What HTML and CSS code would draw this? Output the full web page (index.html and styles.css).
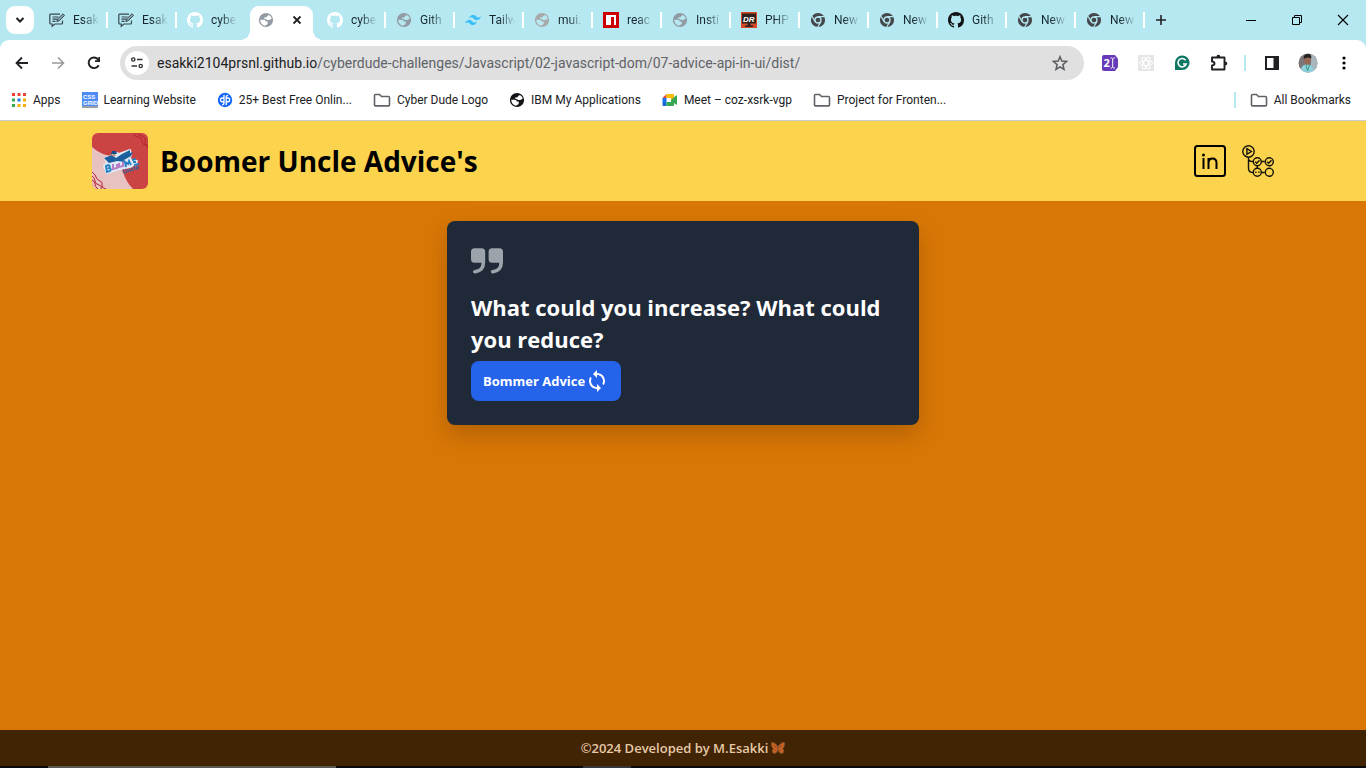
FILE: index.html
```html
<!DOCTYPE html>
<html lang="en">
<head>
<meta charset="utf-8">
<title>Boomer Uncle Advice's</title>
<meta name="viewport" content="width=device-width, initial-scale=1">
<link rel="stylesheet" href="styles.css">
</head>
<body>
<svg class="sprite" aria-hidden="true">
  <symbol id="globe" viewBox="0 0 16 16"><circle cx="8" cy="8" r="7.1" fill="currentColor"/><path class="globe-land" d="M6.300 5.300Q8.800 5.800 9 4.200L10.800 2.900q2.500 1.300 3 3.700L11.500 8H9.200Q8.300 6.900 6.300 7ZM2.200 7.800H5.800q2 0 2 1.600h1.900v2.600L7 13.800Q2.500 13 2.200 7.800Z"/></symbol>
  <symbol id="github" viewBox="0 0 16 16"><path fill="currentColor" fill-rule="evenodd" d="M8 0C3.580 0 0 3.580 0 8c0 3.540 2.290 6.530 5.470 7.590.4.070.55-.17.55-.38 0-.19-.010-.82-.010-1.490-2.010.37-2.530-.49-2.690-.94-.090-.23-.48-.94-.82-1.130-.28-.15-.68-.52-.010-.53.63-.010 1.080.58 1.230.82.72 1.210 1.870.87 2.330.66.070-.52.28-.87.51-1.070-1.780-.2-3.640-.89-3.640-3.950 0-.87.31-1.590.82-2.150-.080-.2-.36-1.020.080-2.120 0 0 .67-.21 2.200.82.64-.18 1.320-.27 2-.27s1.360.090 2 .27c1.530-1.040 2.200-.82 2.200-.82.44 1.100.16 1.920.080 2.120.51.56.82 1.270.82 2.150 0 3.070-1.870 3.750-3.650 3.950.29.25.54.73.54 1.480 0 1.070-.010 1.930-.010 2.200 0 .21.15.46.55.38A8.010 8.010 0 0 0 16 8c0-4.420-3.580-8-8-8Z"/></symbol>
  <symbol id="chrome" viewBox="0 0 16 16"><circle cx="8" cy="8" r="7.100" fill="#44474b"/><circle cx="8" cy="8" r="3" fill="#44474b" stroke="#b6e8f2" stroke-width="1.300"/><path d="M8 4.700h6.300M5.100 9.600 2 4.200M10.900 9.600 7.700 15" stroke="#b6e8f2" stroke-width="1.200"/></symbol>
  <symbol id="note" viewBox="0 0 16 16"><path d="M11 2.200H1.500Q.8 2.200.8 3v8q0 1 1 1h1.400v2.300L6 12h6.500q1 0 1-1V8.500M3.500 5h6M3.500 7.200h5M3.500 9.400h3" fill="none" stroke="#36474f" stroke-width="1.200"/><path d="m7.800 9.500.8-2.500L14 1.800 15.500 3.400 10.300 8.700Z" fill="#8aa7b0" stroke="#36474f"/></symbol>
  <symbol id="folder" viewBox="0 0 18 16"><path d="M1.500 13V3.500q0-1 1-1h4L8.500 4.500h7q1 0 1 1V13q0 .9-1 .9h-13q-1 0-1-.9Z" fill="none" stroke="#5f6368" stroke-width="1.600"/></symbol>
</svg>

<header class="browser">
  <div class="tabstrip">
    <button class="tab-search" aria-label="Search tabs"><svg width="10" height="8" viewBox="0 0 10 8"><path d="m1.500 2 3.500 3.500L8.500 2" fill="none" stroke="#222" stroke-width="2"/></svg></button>
    <nav class="tabs" aria-label="Tabs">
      <a class="tab" href="#"><svg class="icon"><use href="#note"/></svg><span>Esak</span></a>
      <a class="tab" href="#"><svg class="icon"><use href="#note"/></svg><span>Esak</span></a>
      <a class="tab last" href="#"><svg class="icon light"><use href="#github"/></svg><span>cybe</span></a>
      <div class="tab active"><svg class="icon gray on-white"><use href="#globe"/></svg><button class="close" aria-label="Close tab"><svg width="10" height="10" viewBox="0 0 10 10"><path d="m1.500 1.500 7 7m0-7-7 7" stroke="#222" stroke-width="1.800"/></svg></button></div>
      <a class="tab" href="#"><svg class="icon light"><use href="#github"/></svg><span>cybe</span></a>
      <a class="tab" href="#"><svg class="icon gray"><use href="#globe"/></svg><span>Gith</span></a>
      <a class="tab" href="#"><svg class="icon" viewBox="0 0 16 16"><path fill="#38bdf8" d="M4 6.500Q5 3 8 3c3 0 3.400 2.200 4.800 2.500Q14.500 6 16 4q-1 4-4 4C9 8 8.600 5.800 7.200 5.400Q5.500 5 4 6.500ZM0 11.500Q1 8 4 8c3 0 3.400 2.200 4.800 2.500Q10.500 11 12 9q-1 4-4 4c-3 0-3.400-2.200-4.800-2.500Q1.500 10 0 11.500Z"/></svg><span>Tailw</span></a>
      <a class="tab" href="#"><svg class="icon pale"><use href="#globe"/></svg><span>mui.</span></a>
      <a class="tab" href="#"><svg class="icon" viewBox="0 0 16 16"><path fill="#c00" d="M0 0h16v16H0Z"/><path fill="#fff" d="M3 3h10v10h-2V5H8v8H3Z"/></svg><span>reac</span></a>
      <a class="tab" href="#"><svg class="icon gray"><use href="#globe"/></svg><span>Insti</span></a>
      <a class="tab" href="#"><svg class="icon" viewBox="0 0 16 16"><path fill="#d94b27" d="M0 0h16v16H0Z"/><path fill="#32221f" d="M1 1.500h14v10H9.500v2H12V15H4v-1.500h2.500v-2H1Z"/><text class="logo-dr" x="2" y="9.500">DR</text></svg><span>PHP</span></a>
      <a class="tab" href="#"><svg class="icon"><use href="#chrome"/></svg><span>New</span></a>
      <a class="tab" href="#"><svg class="icon"><use href="#chrome"/></svg><span>New</span></a>
      <a class="tab" href="#"><svg class="icon black"><use href="#github"/></svg><span>Gith</span></a>
      <a class="tab" href="#"><svg class="icon"><use href="#chrome"/></svg><span>New</span></a>
      <a class="tab" href="#"><svg class="icon"><use href="#chrome"/></svg><span>New</span></a>
    </nav>
    <button class="new-tab" aria-label="New tab"><svg width="12" height="12" viewBox="0 0 12 12"><path d="M6 1v10M1 6h10" stroke="#222" stroke-width="1.600"/></svg></button>
    <div class="window-controls">
      <button aria-label="Minimize"><svg width="12" height="12"><path d="M1 6.500h10" stroke="#000"/></svg></button>
      <button aria-label="Restore"><svg width="12" height="12"><path d="M1.500 3.500h7v7h-7ZM3.500 3V1.500h7v7H9" fill="none" stroke="#000"/></svg></button>
      <button aria-label="Close window"><svg width="12" height="12"><path d="m1 1 10 10m0-10L1 11" stroke="#000" stroke-width="1.100"/></svg></button>
    </div>
  </div>

  <div class="toolbar">
    <div class="nav-buttons">
      <button aria-label="Back"><svg width="16" height="16"><path d="M14 8H3m5-5.500L2.500 8 8 13.500" fill="none" stroke="#202124" stroke-width="1.800"/></svg></button>
      <button aria-label="Forward"><svg width="16" height="16"><path d="M2 8h11M8 2.500 13.500 8 8 13.500" fill="none" stroke="#9a9a9a" stroke-width="1.600"/></svg></button>
      <button aria-label="Reload"><svg width="16" height="16"><path d="M12.700 10.200A5.300 5.300 0 1 1 12 4.300l1.300 1.500" fill="none" stroke="#202124" stroke-width="1.900"/><path d="M14 2v5H9V5.300h3.300V2Z" fill="#202124"/></svg></button>
    </div>
    <div class="omnibox">
      <button class="site-info" aria-label="Site information"><svg width="14" height="12" viewBox="0 0 14 12"><path d="M7 2.500h5.500M1.500 9H7" stroke="#333" stroke-width="1.700"/><circle cx="3.300" cy="2.500" r="1.600" fill="none" stroke="#333" stroke-width="1.400"/><circle cx="10.700" cy="9" r="1.600" fill="none" stroke="#333" stroke-width="1.400"/></svg></button>
      <a class="url" href="#"><span class="host">esakki2104prsnl.github.io</span>/cyberdude-challenges/Javascript/02-javascript-dom/07-advice-api-in-ui/dist/</a>
      <button class="star" aria-label="Bookmark this page"><svg width="16" height="16" viewBox="0 0 16 16"><path d="m8 1.700 1.800 4.400 4.700.4-3.600 3.100 1.100 4.700L8 11.800l-4 2.500 1.100-4.700-3.600-3.100 4.700-.4Z" fill="none" stroke="#5a5d60" stroke-width="1.500"/></svg></button>
    </div>
    <div class="extensions">
      <button aria-label="Tab counter"><svg width="16" height="16" viewBox="0 0 16 16"><path d="M2 0h11l3 4v8l-3 4H2q-2 0-2-2V2q0-2 2-2Z" fill="#673ab7"/><text class="logo-two" x="1.500" y="12">2</text><path d="M8.500 3h1.200l1 .8 1-.8h1.200M8.500 13h1.200l1-.8 1 .8h1.200M10.700 4v8" stroke="#fff" fill="none"/></svg></button>
      <button aria-label="React developer tools"><svg width="16" height="16" viewBox="0 0 16 16"><path fill="#e6e6e6" d="M0 0h16v16H0Z"/><g fill="none" stroke="#fff"><ellipse cx="8" cy="8" rx="6.500" ry="2.500"/><ellipse cx="8" cy="8" rx="6.500" ry="2.500" transform="rotate(60 8 8)"/><ellipse cx="8" cy="8" rx="6.500" ry="2.500" transform="rotate(120 8 8)"/></g></svg></button>
      <button aria-label="Writing assistant"><svg width="16" height="16" viewBox="0 0 16 16"><path d="M1 15V8a7.300 7.300 0 1 1 7.300 7Z" fill="#0d7763"/><path d="M11.700 5.300A4.200 4.200 0 1 0 12.200 9H9" fill="none" stroke="#fff" stroke-width="1.600"/></svg></button>
      <button aria-label="Extensions"><svg width="18" height="18" viewBox="0 0 18 18"><path d="M2 3.500h12.500v12H2v-4q2.500-.3 2.500-2T2 7.500Z" fill="none" stroke="#202124" stroke-width="1.900" stroke-linejoin="round"/><path d="M6.500 3q0-2.300 1.900-2.300T10.300 3ZM15 7.500q2.300 0 2.300 2T15 11.500Z" fill="#202124"/></svg></button>
    </div>
    <div class="app-buttons">
      <span class="divider"></span>
      <button aria-label="Side panel"><svg width="16" height="16"><path d="M2 2h12v12H2Z" fill="none" stroke="#202124" stroke-width="2"/><path d="M9.500 2H14v12H9.500Z" fill="#202124"/></svg></button>
      <button aria-label="Profile"><svg width="20" height="20" viewBox="0 0 20 20"><defs><clipPath id="avatar"><circle cx="10" cy="10" r="9.500"/></clipPath></defs><g clip-path="url(#avatar)"><path fill="#7b7776" d="M0 0h20v20H0Z"/><path fill="#a9b5bc" d="M13 0h7v20h-7Z"/><path d="M3 20q-1-8 5-8.500h3q5 1 5 8.500Z" fill="#8fd1dc"/><ellipse cx="9.500" cy="7" rx="3.300" ry="4.700" fill="#956956"/><path d="M5.700 6q-.3-5 4-5t3.500 4.500Q10 3.500 5.700 6Z" fill="#222"/><path d="m8 12 1.500 6 2-6" fill="none" stroke="#3a9b82"/></g></svg></button>
      <button class="menu" aria-label="Menu"><svg width="6" height="16"><circle cx="3" cy="3" r="1.600"/><circle cx="3" cy="8" r="1.600"/><circle cx="3" cy="13" r="1.600"/></svg></button>
    </div>
  </div>

  <nav class="bookmarks" aria-label="Bookmarks">
    <a href="#"><svg class="icon apps" viewBox="0 0 16 16"><path fill="#ea4335" d="M1 1h3v3H1ZM6.500 1h3v3h-3ZM12 1h3v3h-3Z"/><path fill="#34a853" d="M1 6.500h3v3H1ZM1 12h3v3H1Z"/><path fill="#1a73e8" d="M6.500 6.500h3v3h-3Z"/><path fill="#fbae0a" d="M12 6.500h3v3h-3ZM6.500 12h3v3h-3ZM12 12h3v3h-3Z"/></svg>Apps</a>
    <a href="#"><svg class="icon" viewBox="0 0 16 16"><path fill="#4d8bf5" d="M0 0h16v16H0Z"/><path fill="#9aa0a6" d="M0 14h16v2H0Z"/><text class="logo-grid" x="1" y="7">CSS</text><text class="logo-grid" x="1" y="13">GRID</text></svg>Learning Website</a>
    <a href="#"><svg class="icon" viewBox="0 0 16 16"><circle cx="8" cy="8" r="7.200" fill="#1264f3"/><path d="M7 2.800v8q0 2-2 1.800M9.200 13.200V5q0-1.800 2-1.600M6.500 6H5Q3.500 6 3.500 8t3 2M9.500 6H11q1.700 0 1.700 2t-3 2" fill="none" stroke="#fff" stroke-width="1.300"/></svg>25+ Best Free Onlin...</a>
    <a href="#"><svg class="folder"><use href="#folder"/></svg>Cyber Dude Logo</a>
    <a href="#"><svg class="icon black on-white"><use href="#globe"/></svg>IBM My Applications</a>
    <a href="#"><svg class="icon" viewBox="0 0 16 16"><path fill="#ea4335" d="M.5 6 4.500 2v4Z"/><path fill="#fbbc04" d="M4.500 2H11q1 0 1 1v4L9 8V6H4.500Z"/><path fill="#1a73e8" d="M.5 6h4v4h-4Z"/><path fill="#1967d2" d="M.5 10h4v4H1.500q-1 0-1-1Z"/><path fill="#34a853" d="M4.500 10H9V8l5-4.500q1-.7 1 .5v8q0 1.200-1 .5l-2-1.600V13q0 1-1 1H4.500Z"/></svg>Meet – coz-xsrk-vgp</a>
    <a href="#"><svg class="folder"><use href="#folder"/></svg>Project for Fronten...</a>
    <a class="all" href="#"><svg class="folder"><use href="#folder"/></svg>All Bookmarks</a>
  </nav>
</header>

<div class="page">
  <header class="site-header">
    <div class="site-header-inner">
      <svg class="logo" viewBox="0 0 56 56" role="img" aria-label="Boomer Uncle logo">
        <path fill="#cc4343" d="M0 0h56v56H0Z"/>
        <path fill="#e8c1c1" d="M0 14Q7 20 14 22 27 23 31 39 34 49 41 56H0Z"/>
        <g fill="none" stroke="#b52631"><path d="M42 0q0 4 4 4t4 4 3 4 3 4M46 0q0 2 4 3t3 5 3 4M0 39q3 2 4 5t4 4 2 4 4 4M0 43q3 2 3 5t4 4 2 4M0 47q3 1 3 4t3 5"/></g>
        <path fill="#dfeaf4" stroke="#dfeaf4" stroke-width="2" stroke-linejoin="round" d="m13 25 7-2 2-4 5 2 11-4 1 5-2 4 8 2-1 3-6 3-10 2-13 4-3-7 3-3Z"/>
        <path fill="#1b5f9f" d="m12 25 8-3 4 3 6-4 8-4v3l3-1-2 4-7 4 1 2-8-1-8 2Z"/>
        <circle cx="22" cy="22" r="1.600" fill="#c78d70"/><path d="m19 21 1-3h4l1 3Z" fill="#194d8b"/>
        <g fill="none" stroke-width="2"><path stroke="#2784c5" d="m14 33 1 6 3-1q2-2-1-3 2-2-1-3Z"/><path stroke="#b97cc8" d="M21 31v5l4-1v-4M27 30v4l4-1v-4"/><path stroke="#2680c4" d="m34 34-1-5 3 2 1-3 2 4m1-5 4-1m-3 3h3m-2 3 5-1"/></g>
        <text class="logo-uncle" x="31" y="41" transform="rotate(-17 31 41)">Uncle</text>
      </svg>
      <h1>Boomer Uncle Advice's</h1>
      <nav class="social">
        <a href="#" aria-label="LinkedIn"><svg width="32" height="32" viewBox="0 0 32 32" fill="none" stroke="#000"><rect x="1" y="1" width="30" height="30" rx="2.500" stroke-width="2"/><path stroke-width="2" d="M9.500 13v11M14.500 13v11M14.500 18q0-4.500 4-4.500t4 4.500v6"/><circle cx="9.500" cy="10" r=".8" stroke-width="1.400"/></svg></a>
        <a href="#" aria-label="GitHub workflow"><svg width="32" height="32" viewBox="0 0 32 32" fill="none" stroke="#151208" stroke-width="1.400"><circle cx="6.500" cy="6.500" r="5.700"/><path d="m4.900 3.700 4.500 2.800-4.500 2.800ZM6.500 12.200V23q0 4.500 4 4.500H11M6.500 14q0 2.500 4.500 2.500M19.500 16.500h3.200M19.500 27.500h3.200M15.300 21v2.200"/><circle cx="15.300" cy="16.800" r="4"/><circle cx="27.300" cy="16.800" r="4"/><circle cx="15.300" cy="27.300" r="4"/><circle cx="27.300" cy="27.300" r="4"/><path d="m13.200 16.800 1.500 1.500 2.800-3M25.200 16.800l1.500 1.500 2.800-3M13.200 27.300h1.300m1.800 0h1.300"/></svg></a>
      </nav>
    </div>
  </header>

  <main>
    <section class="card">
      <svg class="quote" viewBox="0 0 32 32"><path fill="#9ca3ab" d="M3.500 3.200h7.200q3.500 0 3.500 3.500v10.500q0 9.500-9.500 11.200-2.700.3-2.700-1.700 0-1.400 1.700-1.700 6.800-.8 6.800-7.300H3.500Q0 17.700 0 14.200V6.700q0-3.500 3.500-3.500ZM21.300 3.200h7.200q3.500 0 3.500 3.500v10.500q0 9.500-9.500 11.200-2.700.3-2.700-1.700 0-1.400 1.700-1.700 6.800-.8 6.800-7.300h-7.200q-3.500 0-3.500-3.500V6.700q0-3.500 3.500-3.500Z"/></svg>
      <h2>What could you increase? What could you reduce?</h2>
      <button class="advice">Bommer Advice<svg width="24" height="24" viewBox="0 0 24 24"><path fill="#fff" d="M12 4V1L8 5l4 4V6c3.310 0 6 2.690 6 6 0 1.010-.25 1.970-.7 2.800l1.460 1.460A7.930 7.930 0 0 0 20 12c0-4.420-3.580-8-8-8zm0 14c-3.310 0-6-2.690-6-6 0-1.010.25-1.970.7-2.800L5.240 7.740A7.930 7.930 0 0 0 4 12c0 4.420 3.580 8 8 8v3l4-4-4-4v3z"/></svg></button>
    </section>
  </main>

  <footer class="site-footer">©2024 Developed by M.Esakki<svg width="14" height="14" viewBox="0 0 14 14" role="img" aria-label="butterfly"><path fill="#d2621c" stroke="#8b5a32" stroke-width=".8" d="M7 6Q4 1 .7 1.500 0 6 2.500 7.500q-2 2-.5 4.500 3 1.500 5-3 2 4.500 5 3 1.500-2.500-.5-4.500Q14 6 13.300 1.500 10 1 7 6Z"/><path d="M7 4v7M3 4l2.500 3M11 4 8.500 7M3.500 10 5 8.500M10.500 10 9 8.500" stroke="#67483a" stroke-width=".9"/></svg></footer>
</div>
<div class="taskbar"><span class="task-wide"></span><span class="task-small"></span></div>
</body>
</html>
```
FILE: styles.css
```css
* { box-sizing: border-box; }
body {
  margin: 0;
  min-height: 100vh;
  display: flex;
  flex-direction: column;
  font-family: "Open Sans", "Noto Sans", sans-serif;
  color: #000;
}
h1, h2 { margin: 0; }
a { color: inherit; text-decoration: none; }
button {
  display: flex;
  align-items: center;
  justify-content: center;
  padding: 0;
  border: 0;
  background: none;
  font: inherit;
}
svg { display: block; flex: none; }
.sprite { position: absolute; width: 0; height: 0; }
.icon { width: 16px; height: 16px; }
.folder { width: 18px; height: 16px; }
.globe-land { fill: var(--land, #b6e8f2); }
.on-white { --land: #fff; }
.gray { color: #929ba3; }
.pale { color: #a9a9a9; }
.light { color: #fff; }
.black { color: #111316; }

.browser {
  background: #b6e8f2;
  border-bottom: 1px solid #c8cdd0;
  font-family: Roboto, "Open Sans", sans-serif;
}
.tabstrip { display: flex; align-items: center; height: 40px; padding-left: 6px; }
.tab-search { width: 28px; height: 28px; border-radius: 9px; background: #fff; }
.tabs { display: flex; height: 40px; margin-left: 5px; }
.tab {
  display: flex;
  align-items: center;
  gap: 8px;
  width: 69px;
  padding-left: 10px;
  font-size: 12px;
  color: #17272d;
  background: linear-gradient(#fff, #fff) right center / 2px 16px no-repeat;
}
.tab span {
  white-space: nowrap;
  mask-image: linear-gradient(90deg, #000 10px, transparent 26px);
}
.tab.last { background: none; }
.tab.active {
  position: relative;
  align-self: flex-end;
  width: 63px;
  height: 34px;
  margin: 0 4px;
  padding: 0 0 6px 8px;
  gap: 18px;
  border-radius: 9px 9px 0 0;
  background: #fff;
}
.tab.active::before, .tab.active::after {
  content: "";
  position: absolute;
  bottom: 0;
  width: 10px;
  height: 10px;
}
.tab.active::before { right: 100%; background: radial-gradient(circle at 0 0, transparent 10px, #fff 10px); }
.tab.active::after { left: 100%; background: radial-gradient(circle at 100% 0, transparent 10px, #fff 10px); }
.new-tab { width: 32px; height: 28px; }
.window-controls { display: flex; margin-left: auto; }
.window-controls button { width: 46px; height: 40px; }

.toolbar {
  display: flex;
  align-items: center;
  height: 46px;
  padding: 0 14px;
  border-radius: 9px 9px 0 0;
  background: #fff;
}
.nav-buttons { display: flex; gap: 20px; }
.omnibox {
  display: flex;
  flex: 1;
  align-items: center;
  height: 34px;
  margin-left: 18px;
  padding: 0 16px 0 5px;
  border-radius: 17px;
  background: #e0e0e0;
}
.site-info { width: 24px; height: 24px; border-radius: 50%; background: #fff; }
.url { flex: 1; margin-left: 8px; font-size: 14px; color: #5f6368; white-space: nowrap; }
.host { color: #202124; }
.extensions { display: flex; align-items: center; gap: 20px; margin-left: 18px; }
.app-buttons { display: flex; align-items: center; gap: 18px; margin-left: 16px; }
.menu { width: 16px; }
.divider { width: 2px; height: 16px; background: #b6e8f2; }

.bookmarks {
  display: flex;
  align-items: center;
  gap: 21px;
  height: 34px;
  padding: 0 15px 6px 11px;
  background: #fff;
  font-size: 12px;
  color: #202124;
  white-space: nowrap;
}
.bookmarks a { display: flex; align-items: center; gap: 6px; }
.bookmarks .all {
  margin-left: auto;
  padding-left: 16px;
  background: linear-gradient(#b6e8f2, #b6e8f2) left center / 2px 16px no-repeat;
}

.page { display: flex; flex: 1; flex-direction: column; background: #d97706; }
.site-header { padding: 12px 24px; background: #fcd34d; }
.site-header-inner { display: flex; align-items: center; max-width: 1182px; margin: 0 auto; }
.logo { width: 56px; height: 56px; border-radius: 6px; }
h1 { margin-left: 12px; font-size: 28px; line-height: 36px; font-weight: 700; }
.social { display: flex; gap: 16px; margin-left: auto; }

main { flex: 1; padding: 20px 16px; }
.card {
  max-width: 472px;
  margin: 0 auto;
  padding: 24px;
  border-radius: 8px;
  background: #1f2937;
  box-shadow: 0 10px 24px rgb(0 0 0 / 18%);
}
.quote { width: 32px; height: 32px; margin-bottom: 14px; }
h2 { margin-bottom: 6px; font-size: 22px; line-height: 32px; font-weight: 700; color: #fff; }
.advice {
  gap: 0;
  height: 40px;
  padding: 0 12px;
  border-radius: 8px;
  background: #2563eb;
  font-size: 13px;
  font-weight: 700;
  color: #fff;
}
.site-footer {
  display: flex;
  align-items: center;
  justify-content: center;
  gap: 3px;
  height: 36px;
  background: #412404;
  font-size: 13px;
  font-weight: 600;
  color: #e6caa8;
}
.taskbar { display: flex; height: 2px; background: #0b0b0f; }
.task-wide { width: 288px; margin-left: 48px; background: #5b5854; }
.task-small { width: 48px; margin-left: 247px; background: #38383a; }

.logo-dr { font: italic 700 8px "Liberation Sans", sans-serif; fill: #fff; }
.logo-two { font: 700 11px "Open Sans", sans-serif; fill: #fff; }
.logo-grid { font: 700 6px "Liberation Sans", sans-serif; fill: #fff; }
.logo-uncle { font: 700 6px "Open Sans", sans-serif; fill: #1e68a8; }
```
